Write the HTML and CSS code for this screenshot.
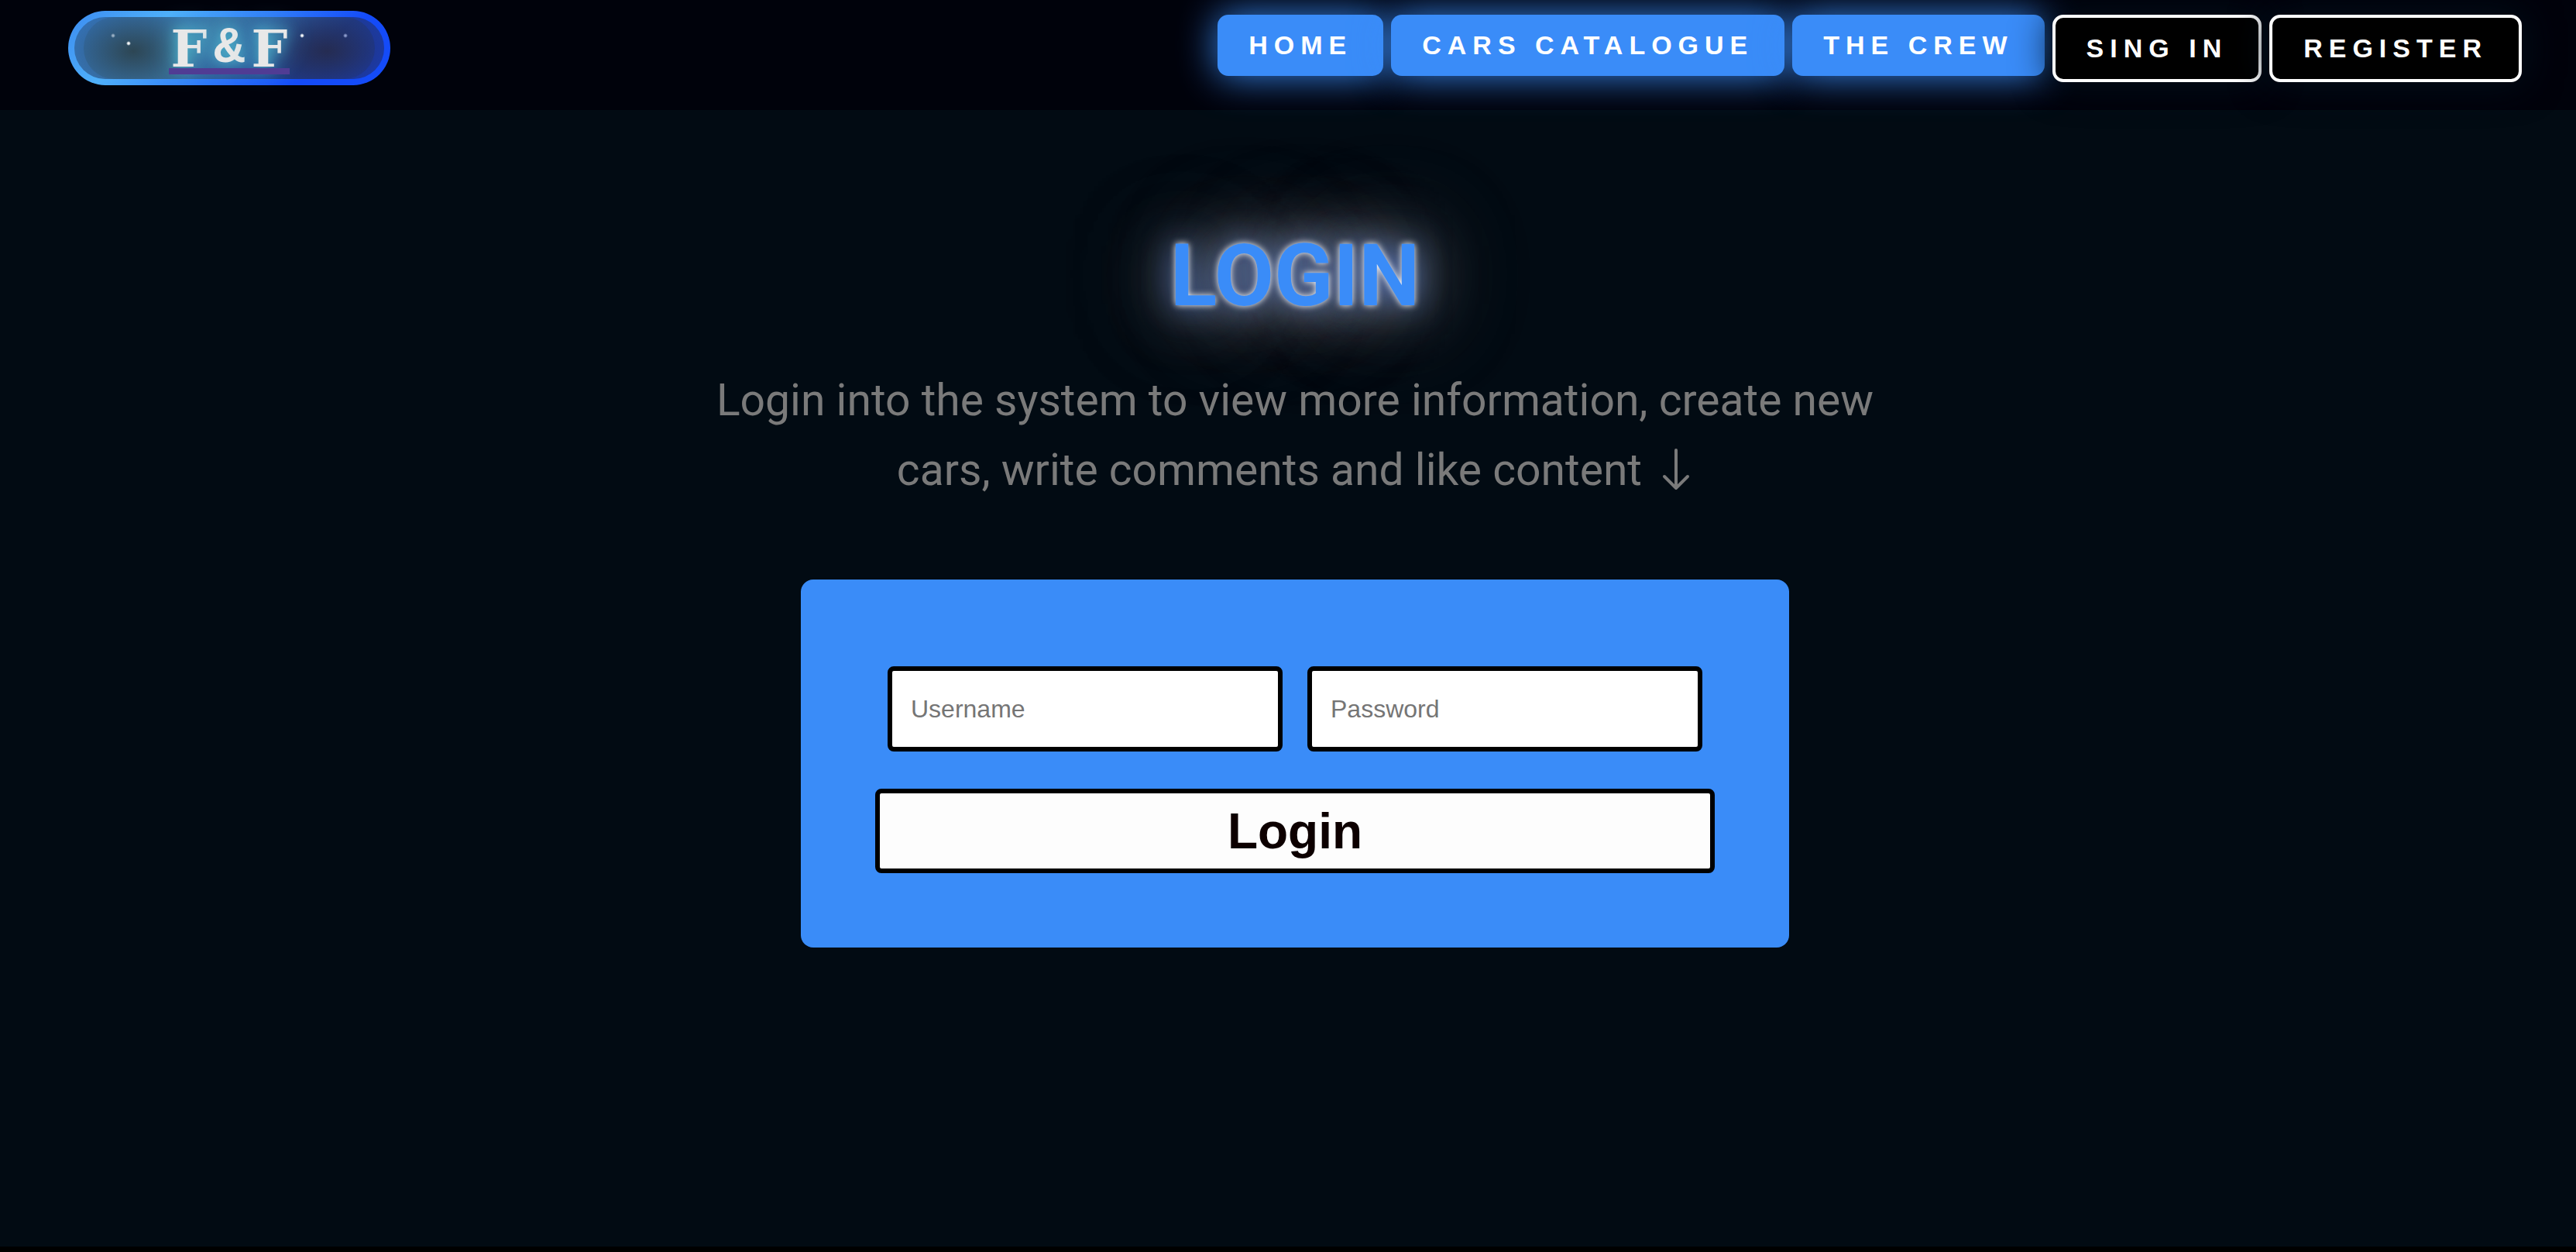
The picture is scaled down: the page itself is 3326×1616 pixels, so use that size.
FILE: index.html
```html
<!DOCTYPE html>
<html lang="en">
<head>
  <meta charset="utf-8">
  <meta name="viewport" content="width=device-width, initial-scale=1">
  <title>F&amp;F - Login</title>
  <link rel="stylesheet" href="styles.css">
</head>
<body>
  <header class="header">
    <a class="logo" href="#" aria-label="F&amp;F">
      <span class="logo-inner"><span class="logo-text"><span>F</span><span class="logo-amp">&amp;</span><span>F</span></span></span>
    </a>
    <nav class="nav">
      <a class="nav-link" href="#">HOME</a>
      <a class="nav-link" href="#">CARS CATALOGUE</a>
      <a class="nav-link" href="#">THE CREW</a>
      <a class="nav-link nav-link-dark" href="#">SING IN</a>
      <a class="nav-link nav-link-dark" href="#">REGISTER</a>
    </nav>
  </header>
  <main class="main">
    <h1 class="title">LOGIN</h1>
    <p class="lead">Login into the system to view more information, create new cars, write comments and like content
      <svg class="arrow" viewBox="0 0 36 54" aria-hidden="true"><path d="M18 2V51M3 36L18 51L33 36"/></svg></p>
    <form class="form">
      <div class="fields">
        <input class="field" type="text" placeholder="Username" aria-label="Username">
        <input class="field" type="password" placeholder="Password" aria-label="Password">
      </div>
      <button class="submit" type="button">Login</button>
    </form>
  </main>
</body>
</html>
```
FILE: styles.css
```css
* {
  box-sizing: border-box;
}

body {
  margin: 0;
  min-height: 100vh;
  display: flex;
  flex-direction: column;
  background: #020b13;
  border-bottom: 7px solid #000;
  font-family: "Liberation Sans", Arial, sans-serif;
}

.header {
  display: flex;
  justify-content: space-between;
  align-items: flex-start;
  height: 142px;
  padding: 14px 70px 0 88px;
  background: #00020b;
}

/* Logo: gradient ring round a dark starry pill */
.logo {
  display: flex;
  width: 416px;
  height: 96px;
  padding: 8px;
  border-radius: 48px;
  background: linear-gradient(137deg, #3b8bf0 0%, #4fb0fa 26%, #144bf8 76%);
  text-decoration: none;
}

.logo-inner {
  flex: 1;
  display: flex;
  justify-content: center;
  align-items: flex-start;
  padding-top: 10px;
  border-radius: 40px;
  background:
    radial-gradient(circle, #fff 1px, transparent 3px) 60px 24px / 20px 20px no-repeat,
    radial-gradient(circle, #fff 1px, transparent 3px) 284px 14px / 20px 20px no-repeat,
    radial-gradient(circle, #9ab0c4 1px, transparent 3px) 40px 14px / 20px 20px no-repeat,
    radial-gradient(circle, #8b9acb 1px, transparent 3px) 340px 14px / 20px 20px no-repeat,
    radial-gradient(90px 60px at 76px 44px, #2d4654, transparent),
    radial-gradient(100px 60px at 326px 44px, #252c52, transparent),
    linear-gradient(137deg, #316db0 0%, #3b75a4 40%, #1f3c8c 75%, #1a3bb0 100%);
  box-shadow: inset 12px 0 0 rgba(60, 130, 220, .25), inset -12px 0 0 rgba(25, 65, 220, .25);
}

.logo-text {
  display: grid;
  grid-template-columns: repeat(3, 52px);
  grid-template-rows: 56px 8px;
  color: #e8e8e8;
  font: bold 66px/62px "DejaVu Serif", serif;
  text-align: center;
  text-shadow: 0 0 16px #4fb4cc, 0 0 32px #4fb4cc;
}

.logo-text::after {
  content: "";
  grid-column: 1 / -1;
  background: #503c94;
}

.logo-text .logo-amp {
  font-family: "Liberation Mono", monospace;
}

.nav {
  display: flex;
  align-items: flex-start;
  gap: 10px;
  padding-top: 5px;
}

.nav-link {
  padding: 20px 40px;
  border-radius: 14px;
  background: #3a8cf8;
  box-shadow: 0 0 50px rgba(58, 140, 248, .95);
  color: #fff;
  font-size: 34px;
  font-weight: bold;
  line-height: 39px;
  letter-spacing: 8px;
  text-decoration: none;
}

.nav-link-dark {
  border: 4px solid #fff;
  background: #000;
  box-shadow: 0 0 50px #03101c;
}

.main {
  display: flex;
  flex-direction: column;
  align-items: center;
  padding: 148px 0 0 18px;
}

.title {
  margin: 0;
  color: #3a8cf8;
  font: bold 112px/132px Roboto, sans-serif;
  text-shadow:
    0 0 8px #fff,
    0 0 40px rgba(90, 130, 220, .9),
    0 0 80px rgba(220, 210, 200, .6),
    0 0 120px rgba(220, 210, 200, .5),
    0 0 160px rgba(220, 210, 200, .4);
}

.lead {
  max-width: 1520px;
  margin: 50px 0 96px;
  color: #7a7a7a;
  font: 57px/90px Roboto, sans-serif;
  text-align: center;
}

.arrow {
  width: 36px;
  height: 54px;
  margin: 0 4px 0 12px;
  vertical-align: -7px;
  fill: none;
  stroke: #7a7a7a;
  stroke-width: 4;
  stroke-linecap: round;
  stroke-linejoin: round;
}

.form {
  width: 1276px;
  max-width: 100%;
  padding: 112px 96px 96px;
  border-radius: 16px;
  background: #3a8cf8;
}

.fields {
  display: flex;
  gap: 32px;
  padding: 0 16px;
  margin-bottom: 48px;
}

.field {
  flex: 1;
  min-width: 0;
  height: 110px;
  padding: 0 24px;
  border: 6px solid #000;
  border-radius: 8px;
  background: #fff;
  font: 32px "Liberation Sans", Arial, sans-serif;
}

.field::placeholder {
  color: #757575;
}

.submit {
  display: block;
  width: 100%;
  height: 109px;
  padding: 0;
  border: 6px solid #000;
  border-radius: 8px;
  background: #fdfdfd;
  color: #0d0000;
  font: bold 64px "Liberation Sans", Arial, sans-serif;
}
```
